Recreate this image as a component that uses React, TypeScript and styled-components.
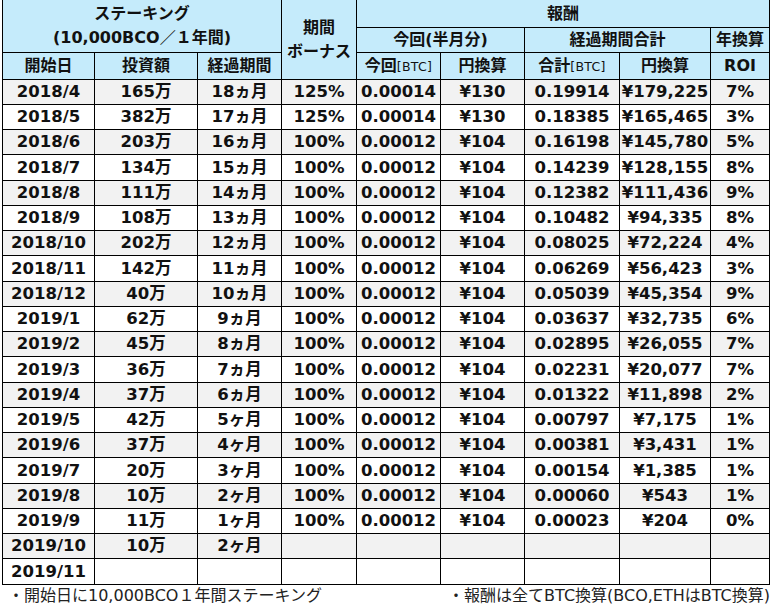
import React from "react";
import styled, { createGlobalStyle } from "styled-components";

const Global = createGlobalStyle`
  html, body { margin: 0; padding: 0; background: #ffffff; }
  body { font-family: "DejaVu Sans", "Noto Sans CJK JP", sans-serif; color: #111; }
`;

const Page = styled.div`
  width: 774px;
  height: 610px;
  overflow: hidden;
  padding-left: 2px;
  box-sizing: border-box;
`;

const Table = styled.table`
  border-collapse: collapse;
  table-layout: fixed;
  margin-top: -1px;
  font-family: "DejaVu Sans", "Noto Sans CJK JP", sans-serif;
  font-weight: bold;
  font-size: 16.5px;
  color: #111;
`;

const HeadRow = styled.tr<{ $h: number }>`
  height: ${(p) => p.$h}px;
  background: #c5ebfb;
`;

const Th = styled.th`
  border: 1px solid #000;
  padding: 0;
  text-align: center;
  vertical-align: middle;
  font-weight: bold;
  font-size: 16px;
  line-height: 24px;
  white-space: nowrap;
  overflow: hidden;
`;

const Small = styled.span`
  font-weight: normal;
  font-size: 12.5px;
  letter-spacing: 0.3px;
`;

const BodyRow = styled.tr<{ $h: number; $shade: boolean }>`
  height: ${(p) => p.$h}px;
  background: ${(p) => (p.$shade ? "#f2f2f2" : "#ffffff")};
`;

const Td = styled.td`
  border: 1px solid #000;
  padding: 0;
  text-align: center;
  vertical-align: middle;
  line-height: 20px;
  white-space: nowrap;
  overflow: hidden;
`;

const Footer = styled.div`
  display: flex;
  justify-content: space-between;
  width: 768px;
  padding: 1px 0 0 6px;
  box-sizing: border-box;
  font-family: "DejaVu Sans", "Noto Sans CJK JP", sans-serif;
  font-size: 16px;
  line-height: 20px;
  color: #222;
`;

const colWidths = [92, 103, 84, 75, 84, 84, 95, 91, 59];

const rows: string[][] = [
  ["2018/4", "165万", "18ヵ月", "125%", "0.00014", "¥130", "0.19914", "¥179,225", "7%"],
  ["2018/5", "382万", "17ヵ月", "125%", "0.00014", "¥130", "0.18385", "¥165,465", "3%"],
  ["2018/6", "203万", "16ヵ月", "100%", "0.00012", "¥104", "0.16198", "¥145,780", "5%"],
  ["2018/7", "134万", "15ヵ月", "100%", "0.00012", "¥104", "0.14239", "¥128,155", "8%"],
  ["2018/8", "111万", "14ヵ月", "100%", "0.00012", "¥104", "0.12382", "¥111,436", "9%"],
  ["2018/9", "108万", "13ヵ月", "100%", "0.00012", "¥104", "0.10482", "¥94,335", "8%"],
  ["2018/10", "202万", "12ヵ月", "100%", "0.00012", "¥104", "0.08025", "¥72,224", "4%"],
  ["2018/11", "142万", "11ヵ月", "100%", "0.00012", "¥104", "0.06269", "¥56,423", "3%"],
  ["2018/12", "40万", "10ヵ月", "100%", "0.00012", "¥104", "0.05039", "¥45,354", "9%"],
  ["2019/1", "62万", "9ヵ月", "100%", "0.00012", "¥104", "0.03637", "¥32,735", "6%"],
  ["2019/2", "45万", "8ヵ月", "100%", "0.00012", "¥104", "0.02895", "¥26,055", "7%"],
  ["2019/3", "36万", "7ヵ月", "100%", "0.00012", "¥104", "0.02231", "¥20,077", "7%"],
  ["2019/4", "37万", "6ヵ月", "100%", "0.00012", "¥104", "0.01322", "¥11,898", "2%"],
  ["2019/5", "42万", "5ヶ月", "100%", "0.00012", "¥104", "0.00797", "¥7,175", "1%"],
  ["2019/6", "37万", "4ヶ月", "100%", "0.00012", "¥104", "0.00381", "¥3,431", "1%"],
  ["2019/7", "20万", "3ヶ月", "100%", "0.00012", "¥104", "0.00154", "¥1,385", "1%"],
  ["2019/8", "10万", "2ヶ月", "100%", "0.00012", "¥104", "0.00060", "¥543", "1%"],
  ["2019/9", "11万", "1ヶ月", "100%", "0.00012", "¥104", "0.00023", "¥204", "0%"],
  ["2019/10", "10万", "2ヶ月", "", "", "", "", "", ""],
  ["2019/11", "", "", "", "", "", "", "", ""],
];

const rowHeight = (i: number) => (i % 4 === 3 ? 26 : 25);

export default function App() {
  return (
    <Page>
      <Global />
      <Table>
        <colgroup>
          {colWidths.map((w, i) => (
            <col key={i} style={{ width: w }} />
          ))}
        </colgroup>
        <thead>
          <HeadRow $h={28}>
            <Th colSpan={3} rowSpan={2}>
              ステーキング
              <br />
              (10,000BCO／１年間)
            </Th>
            <Th rowSpan={3}>
              期間
              <br />
              ボーナス
            </Th>
            <Th colSpan={5}>報酬</Th>
          </HeadRow>
          <HeadRow $h={25}>
            <Th colSpan={2}>今回(半月分)</Th>
            <Th colSpan={2}>経過期間合計</Th>
            <Th>年換算</Th>
          </HeadRow>
          <HeadRow $h={27}>
            <Th>開始日</Th>
            <Th>投資額</Th>
            <Th>経過期間</Th>
            <Th>
              今回<Small>[BTC]</Small>
            </Th>
            <Th>円換算</Th>
            <Th>
              合計<Small>[BTC]</Small>
            </Th>
            <Th>円換算</Th>
            <Th>ROI</Th>
          </HeadRow>
        </thead>
        <tbody>
          {rows.map((r, i) => (
            <BodyRow key={i} $h={rowHeight(i)} $shade={i % 2 === 0}>
              {r.map((c, j) => (
                <Td key={j}>{c}</Td>
              ))}
            </BodyRow>
          ))}
        </tbody>
      </Table>
      <Footer>
        <span>・開始日に10,000BCO１年間ステーキング</span>
        <span>・報酬は全てBTC換算(BCO,ETHはBTC換算)</span>
      </Footer>
    </Page>
  );
}
